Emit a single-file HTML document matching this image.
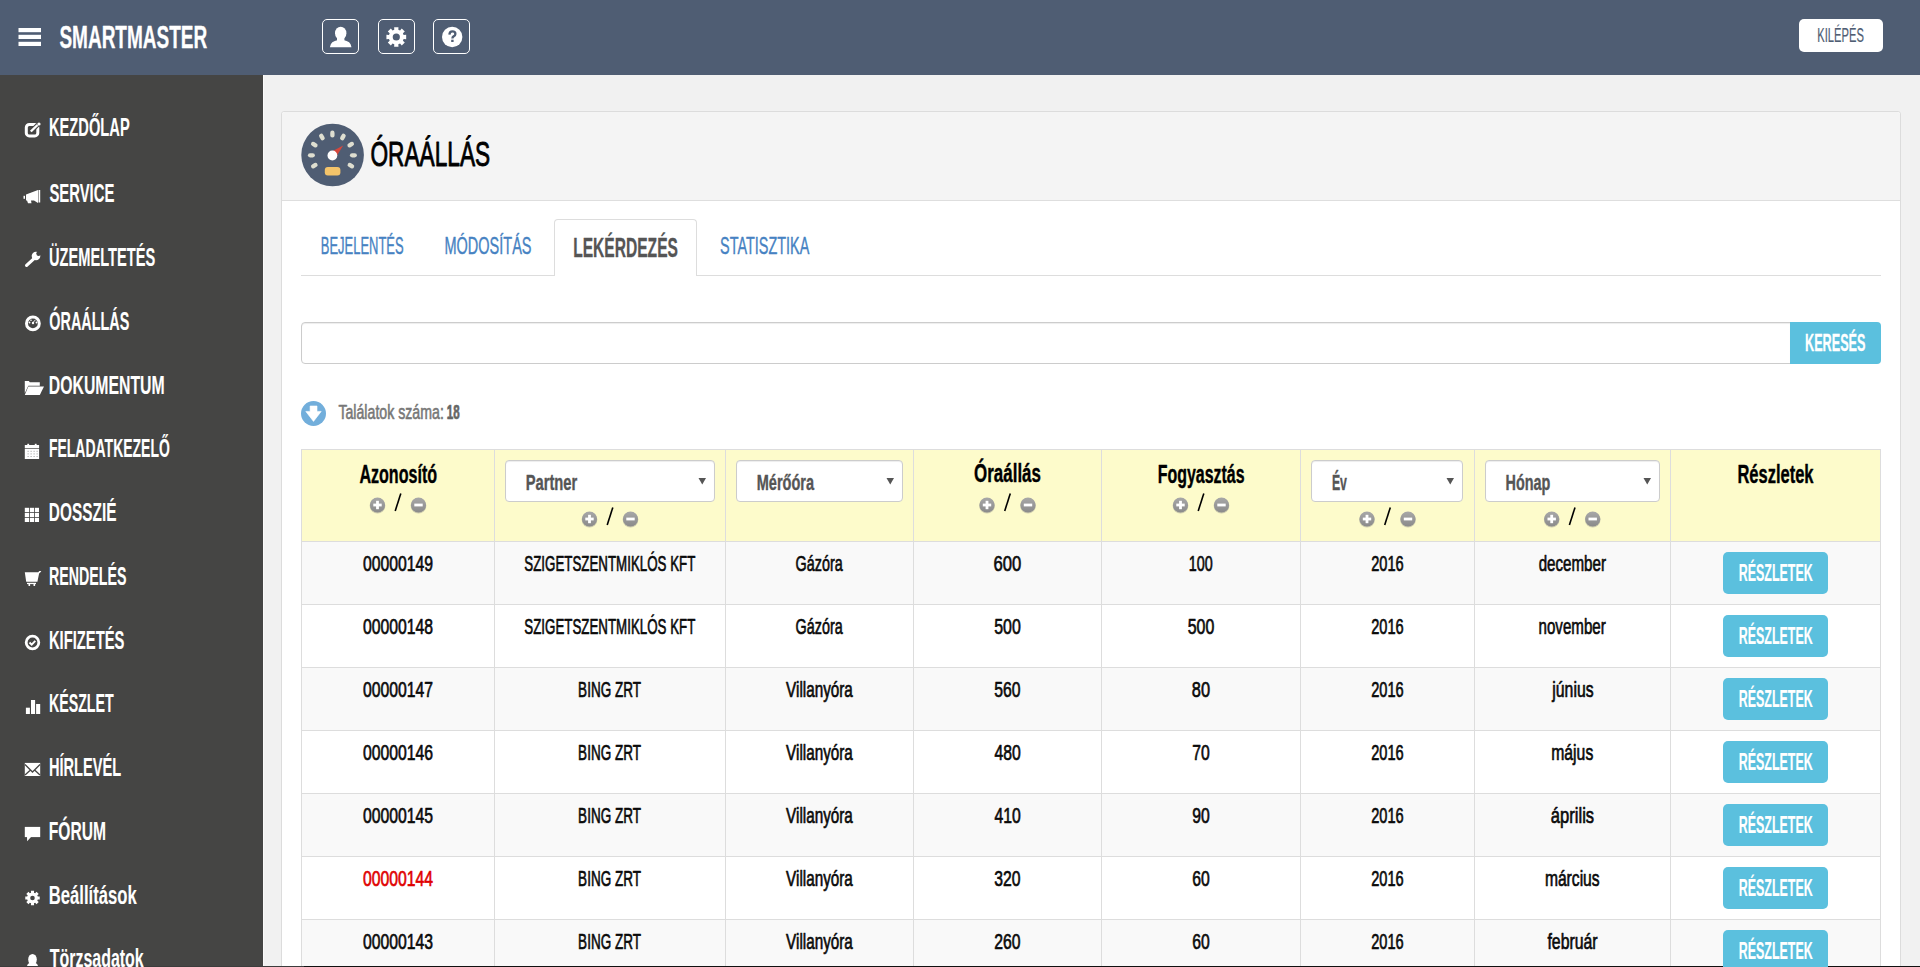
<!DOCTYPE html>
<html><head><meta charset="utf-8"><title>Óraállás - SmartMaster</title>
<style>
html,body{margin:0;padding:0;width:1920px;height:967px;overflow:hidden;background:#f1f1f1;font-family:"Liberation Sans",sans-serif}
#root{position:relative;width:1920px;height:967px;overflow:hidden}
svg{position:absolute;left:0;top:0}
svg text{font-family:"Liberation Sans",sans-serif}
</style></head><body><div id="root">
<div style="position:absolute;left:0px;top:0px;width:1920px;height:75px;background:#4f5d73"></div>
<div style="position:absolute;left:0px;top:75px;width:263px;height:892px;background:#454544"></div>
<div style="position:absolute;left:263px;top:75px;width:1px;height:892px;background:#fafafa"></div>
<div style="position:absolute;left:281px;top:111px;width:1620px;height:900px;background:#fff;border:1px solid #dcdcdc;border-radius:3px;box-sizing:border-box"></div>
<div style="position:absolute;left:282px;top:112px;width:1618px;height:88px;background:#f4f4f4;border-radius:3px 3px 0 0"></div>
<div style="position:absolute;left:282px;top:200px;width:1618px;height:1px;background:#dedede"></div>
<div style="position:absolute;left:301px;top:275px;width:1580px;height:1px;background:#dddddd"></div>
<div style="position:absolute;left:554px;top:219px;width:143px;height:57px;background:#fff;border:1px solid #dddddd;border-bottom:none;border-radius:4px 4px 0 0;box-sizing:border-box"></div>
<div style="position:absolute;left:301px;top:322px;width:1490px;height:42px;background:#fff;border:1px solid #cccccc;border-radius:4px 0 0 4px;box-sizing:border-box;box-shadow:inset 0 1px 1px rgba(0,0,0,.075)"></div>
<div style="position:absolute;left:1790px;top:322px;width:91px;height:42px;background:#5bc0de;border-radius:0 4px 4px 0"></div>
<div style="position:absolute;left:322px;top:19px;width:37px;height:35px;border:1px solid #fff;border-radius:5px;box-sizing:border-box"></div>
<div style="position:absolute;left:378px;top:19px;width:37px;height:35px;border:1px solid #fff;border-radius:5px;box-sizing:border-box"></div>
<div style="position:absolute;left:433px;top:19px;width:37px;height:35px;border:1px solid #fff;border-radius:5px;box-sizing:border-box"></div>
<div style="position:absolute;left:1799px;top:19px;width:84px;height:33px;background:#fff;border-radius:5px"></div>
<div style="position:absolute;left:301px;top:449px;width:1580px;height:92px;background:#fdfbcb"></div>
<div style="position:absolute;left:301px;top:541px;width:1580px;height:63px;background:#f9f9f9"></div>
<div style="position:absolute;left:301px;top:604px;width:1580px;height:63px;background:#ffffff"></div>
<div style="position:absolute;left:301px;top:667px;width:1580px;height:63px;background:#f9f9f9"></div>
<div style="position:absolute;left:301px;top:730px;width:1580px;height:63px;background:#ffffff"></div>
<div style="position:absolute;left:301px;top:793px;width:1580px;height:63px;background:#f9f9f9"></div>
<div style="position:absolute;left:301px;top:856px;width:1580px;height:63px;background:#ffffff"></div>
<div style="position:absolute;left:301px;top:919px;width:1580px;height:63px;background:#f9f9f9"></div>
<div style="position:absolute;left:301px;top:449px;width:1580px;height:1px;background:#dddddd"></div>
<div style="position:absolute;left:301px;top:541px;width:1580px;height:1px;background:#dddddd"></div>
<div style="position:absolute;left:301px;top:604px;width:1580px;height:1px;background:#dddddd"></div>
<div style="position:absolute;left:301px;top:667px;width:1580px;height:1px;background:#dddddd"></div>
<div style="position:absolute;left:301px;top:730px;width:1580px;height:1px;background:#dddddd"></div>
<div style="position:absolute;left:301px;top:793px;width:1580px;height:1px;background:#dddddd"></div>
<div style="position:absolute;left:301px;top:856px;width:1580px;height:1px;background:#dddddd"></div>
<div style="position:absolute;left:301px;top:919px;width:1580px;height:1px;background:#dddddd"></div>
<div style="position:absolute;left:301px;top:982px;width:1580px;height:1px;background:#dddddd"></div>
<div style="position:absolute;left:301px;top:449px;width:1px;height:600px;background:#dddddd"></div>
<div style="position:absolute;left:494px;top:449px;width:1px;height:600px;background:#dddddd"></div>
<div style="position:absolute;left:725px;top:449px;width:1px;height:600px;background:#dddddd"></div>
<div style="position:absolute;left:913px;top:449px;width:1px;height:600px;background:#dddddd"></div>
<div style="position:absolute;left:1101px;top:449px;width:1px;height:600px;background:#dddddd"></div>
<div style="position:absolute;left:1300px;top:449px;width:1px;height:600px;background:#dddddd"></div>
<div style="position:absolute;left:1474px;top:449px;width:1px;height:600px;background:#dddddd"></div>
<div style="position:absolute;left:1670px;top:449px;width:1px;height:600px;background:#dddddd"></div>
<div style="position:absolute;left:1880px;top:449px;width:1px;height:600px;background:#dddddd"></div>
<div style="position:absolute;left:505px;top:460px;width:210px;height:42px;background:#fff;border:1px solid #cccccc;border-radius:4px;box-sizing:border-box;box-shadow:inset 0 1px 1px rgba(0,0,0,.075)"></div>
<div style="position:absolute;left:736px;top:460px;width:167px;height:42px;background:#fff;border:1px solid #cccccc;border-radius:4px;box-sizing:border-box;box-shadow:inset 0 1px 1px rgba(0,0,0,.075)"></div>
<div style="position:absolute;left:1311px;top:460px;width:152px;height:42px;background:#fff;border:1px solid #cccccc;border-radius:4px;box-sizing:border-box;box-shadow:inset 0 1px 1px rgba(0,0,0,.075)"></div>
<div style="position:absolute;left:1485px;top:460px;width:175px;height:42px;background:#fff;border:1px solid #cccccc;border-radius:4px;box-sizing:border-box;box-shadow:inset 0 1px 1px rgba(0,0,0,.075)"></div>
<div style="position:absolute;left:0px;top:966px;width:304px;height:1px;background:#3c3c3c"></div>
<div style="position:absolute;left:304px;top:966px;width:1616px;height:1px;background:#111"></div>
<div style="position:absolute;left:1723px;top:552px;width:105px;height:42px;background:#5bc0de;border-radius:5px"></div>
<div style="position:absolute;left:1723px;top:615px;width:105px;height:42px;background:#5bc0de;border-radius:5px"></div>
<div style="position:absolute;left:1723px;top:678px;width:105px;height:42px;background:#5bc0de;border-radius:5px"></div>
<div style="position:absolute;left:1723px;top:741px;width:105px;height:42px;background:#5bc0de;border-radius:5px"></div>
<div style="position:absolute;left:1723px;top:804px;width:105px;height:42px;background:#5bc0de;border-radius:5px"></div>
<div style="position:absolute;left:1723px;top:867px;width:105px;height:42px;background:#5bc0de;border-radius:5px"></div>
<div style="position:absolute;left:1723px;top:930px;width:105px;height:42px;background:#5bc0de;border-radius:5px"></div>
<svg width="1920" height="967" viewBox="0 0 1920 967">
<defs><linearGradient id="pmg" x1="0" y1="0" x2="0" y2="1"><stop offset="0" stop-color="#a8a8a8"/><stop offset="1" stop-color="#8a8a8a"/></linearGradient></defs>
<rect x="18.5" y="28" width="22.5" height="4.2" fill="#fff"/>
<rect x="18.5" y="34.8" width="22.5" height="4.2" fill="#fff"/>
<rect x="18.5" y="41.8" width="22.5" height="4.2" fill="#fff"/>
<ellipse cx="340.7" cy="33.2" rx="5.7" ry="6.5" fill="#fff"/><rect x="337" y="37" width="7.4" height="4" fill="#fff"/><path d="M329.9,47.2 L330.8,44.2 Q331.8,41.8 334.8,41 L337.3,40.2 L344.1,40.2 L346.6,41 Q349.6,41.8 350.6,44.2 L351.5,47.2 Z" fill="#fff"/>
<polygon points="403.62,34.97 406.17,34.84 406.17,39.16 403.62,39.03 402.91,40.75 404.81,42.45 401.75,45.51 400.05,43.61 398.33,44.32 398.46,46.87 394.14,46.87 394.27,44.32 392.55,43.61 390.85,45.51 387.79,42.45 389.69,40.75 388.98,39.03 386.43,39.16 386.43,34.84 388.98,34.97 389.69,33.25 387.79,31.55 390.85,28.49 392.55,30.39 394.27,29.68 394.14,27.13 398.46,27.13 398.33,29.68 400.05,30.39 401.75,28.49 404.81,31.55 402.91,33.25" fill="#fff"/><circle cx="396.3" cy="37" r="3.6" fill="#4f5d73"/>
<circle cx="452.2" cy="37" r="10.2" fill="#fff"/><path d="M449.4,34.6 Q449.6,31.4 452.4,31.4 Q455.4,31.4 455.4,34 Q455.4,35.6 453.6,36.4 Q452.4,37 452.4,38.4" fill="none" stroke="#4f5d73" stroke-width="2.3"/><rect x="451.2" y="39.7" width="2.4" height="2.3" fill="#4f5d73"/>
<circle cx="332.6" cy="155" r="31.3" fill="#4f5d73"/>
<rect x="328.9" y="131.95" width="7" height="4.3" rx="2.15" fill="#deded0" transform="rotate(-90.3 332.4 134.1)"/>
<rect x="318.4" y="134.85" width="7" height="4.3" rx="2.15" fill="#deded0" transform="rotate(-120.1 321.9 137)"/>
<rect x="339.4" y="134.85" width="7" height="4.3" rx="2.15" fill="#deded0" transform="rotate(-60.4 342.9 137)"/>
<rect x="310.8" y="142.45" width="7" height="4.3" rx="2.15" fill="#deded0" transform="rotate(-149.5 314.3 144.6)"/>
<rect x="347.2" y="142.45" width="7" height="4.3" rx="2.15" fill="#deded0" transform="rotate(-30.5 350.7 144.6)"/>
<rect x="307.9" y="153.15" width="7" height="4.3" rx="2.15" fill="#deded0" transform="rotate(180.0 311.4 155.3)"/>
<rect x="349.9" y="153.15" width="7" height="4.3" rx="2.15" fill="#deded0" transform="rotate(0.0 353.4 155.3)"/>
<rect x="310.8" y="163.45" width="7" height="4.3" rx="2.15" fill="#deded0" transform="rotate(150.5 314.3 165.6)"/>
<rect x="347.4" y="163.45" width="7" height="4.3" rx="2.15" fill="#deded0" transform="rotate(29.2 350.9 165.6)"/>
<polygon points="329.8,152.6 343.2,145.6 335.2,158.2" fill="#d4473d"/>
<circle cx="332.4" cy="155.5" r="4.9" fill="#fff"/>
<rect x="324.8" y="167" width="15.6" height="8.4" rx="3" fill="#f4c46a"/>
<circle cx="313.5" cy="413.5" r="12.5" fill="#72aedb"/><path d="M310.1,406 h6.9 v5.4 h4.2 l-7.7,10 l-7.7,-10 h4.3z" fill="#fff" stroke="#fff" stroke-width=".6" stroke-linejoin="round"/>
<polygon points="698.5,478 706,478 702.25,484.5" fill="#555"/>
<polygon points="886.5,478 894,478 890.25,484.5" fill="#555"/>
<polygon points="1446.5,478 1454,478 1450.25,484.5" fill="#555"/>
<polygon points="1643.5,478 1651,478 1647.25,484.5" fill="#555"/>
<circle cx="377.5" cy="505.8" r="7.8" fill="#7a7a7a" opacity=".35"/><circle cx="377.5" cy="505" r="7.6" fill="url(#pmg)"/><rect x="373.3" y="503.6" width="8.4" height="2.8" fill="#fff"/><rect x="376.1" y="500.8" width="2.8" height="8.4" fill="#fff"/><circle cx="418.5" cy="505.8" r="7.8" fill="#7a7a7a" opacity=".35"/><circle cx="418.5" cy="505" r="7.6" fill="url(#pmg)"/><rect x="414.3" y="503.6" width="8.4" height="2.8" fill="#fff"/><line x1="395.2" y1="511" x2="400.8" y2="493.5" stroke="#000" stroke-width="1.6"/>
<circle cx="987.0" cy="505.8" r="7.8" fill="#7a7a7a" opacity=".35"/><circle cx="987.0" cy="505" r="7.6" fill="url(#pmg)"/><rect x="982.8" y="503.6" width="8.4" height="2.8" fill="#fff"/><rect x="985.6" y="500.8" width="2.8" height="8.4" fill="#fff"/><circle cx="1028.0" cy="505.8" r="7.8" fill="#7a7a7a" opacity=".35"/><circle cx="1028.0" cy="505" r="7.6" fill="url(#pmg)"/><rect x="1023.8" y="503.6" width="8.4" height="2.8" fill="#fff"/><line x1="1004.7" y1="511" x2="1010.3" y2="493.5" stroke="#000" stroke-width="1.6"/>
<circle cx="1180.5" cy="505.8" r="7.8" fill="#7a7a7a" opacity=".35"/><circle cx="1180.5" cy="505" r="7.6" fill="url(#pmg)"/><rect x="1176.3" y="503.6" width="8.4" height="2.8" fill="#fff"/><rect x="1179.1" y="500.8" width="2.8" height="8.4" fill="#fff"/><circle cx="1221.5" cy="505.8" r="7.8" fill="#7a7a7a" opacity=".35"/><circle cx="1221.5" cy="505" r="7.6" fill="url(#pmg)"/><rect x="1217.3" y="503.6" width="8.4" height="2.8" fill="#fff"/><line x1="1198.2" y1="511" x2="1203.8" y2="493.5" stroke="#000" stroke-width="1.6"/>
<circle cx="589.5" cy="519.8" r="7.8" fill="#7a7a7a" opacity=".35"/><circle cx="589.5" cy="519" r="7.6" fill="url(#pmg)"/><rect x="585.3" y="517.6" width="8.4" height="2.8" fill="#fff"/><rect x="588.1" y="514.8" width="2.8" height="8.4" fill="#fff"/><circle cx="630.5" cy="519.8" r="7.8" fill="#7a7a7a" opacity=".35"/><circle cx="630.5" cy="519" r="7.6" fill="url(#pmg)"/><rect x="626.3" y="517.6" width="8.4" height="2.8" fill="#fff"/><line x1="607.2" y1="525" x2="612.8" y2="507.5" stroke="#000" stroke-width="1.6"/>
<circle cx="1367.0" cy="519.8" r="7.8" fill="#7a7a7a" opacity=".35"/><circle cx="1367.0" cy="519" r="7.6" fill="url(#pmg)"/><rect x="1362.8" y="517.6" width="8.4" height="2.8" fill="#fff"/><rect x="1365.6" y="514.8" width="2.8" height="8.4" fill="#fff"/><circle cx="1408.0" cy="519.8" r="7.8" fill="#7a7a7a" opacity=".35"/><circle cx="1408.0" cy="519" r="7.6" fill="url(#pmg)"/><rect x="1403.8" y="517.6" width="8.4" height="2.8" fill="#fff"/><line x1="1384.7" y1="525" x2="1390.3" y2="507.5" stroke="#000" stroke-width="1.6"/>
<circle cx="1551.7" cy="519.8" r="7.8" fill="#7a7a7a" opacity=".35"/><circle cx="1551.7" cy="519" r="7.6" fill="url(#pmg)"/><rect x="1547.5" y="517.6" width="8.4" height="2.8" fill="#fff"/><rect x="1550.3" y="514.8" width="2.8" height="8.4" fill="#fff"/><circle cx="1592.7" cy="519.8" r="7.8" fill="#7a7a7a" opacity=".35"/><circle cx="1592.7" cy="519" r="7.6" fill="url(#pmg)"/><rect x="1588.5" y="517.6" width="8.4" height="2.8" fill="#fff"/><line x1="1569.4" y1="525" x2="1575.0" y2="507.5" stroke="#000" stroke-width="1.6"/>
<rect x="26.3" y="124.4" width="11.5" height="11.5" rx="3" fill="none" stroke="#fff" stroke-width="3"/><line x1="30.5" y1="131.8" x2="38" y2="124.5" stroke="#454544" stroke-width="4.5"/><line x1="30.8" y1="131.5" x2="37.5" y2="125" stroke="#fff" stroke-width="2.4"/><circle cx="39" cy="124" r="1.6" fill="#fff"/>
<path d="M26,194.5 L38,190 L38,203 L34,200.5 L31,200.5 L31.5,203.3 L28,203.3 L27,200.5 L26,200.5 Z" fill="#fff"/><rect x="38.5" y="190" width="1.7" height="12.5" fill="#fff"/><rect x="23.5" y="195.8" width="1.5" height="3" fill="#fff"/>
<line x1="26.6" y1="265.4" x2="34" y2="258.6" stroke="#fff" stroke-width="3.2" stroke-linecap="round"/><circle cx="36" cy="256" r="4.3" fill="#fff"/><circle cx="38.6" cy="253.6" r="2.3" fill="#454544"/>
<circle cx="32.9" cy="323.4" r="6.4" fill="none" stroke="#fff" stroke-width="3"/><circle cx="33" cy="323" r="1.2" fill="#fff"/><circle cx="29.5" cy="322.5" r=".9" fill="#fff"/><circle cx="36.5" cy="322.5" r=".9" fill="#fff"/><circle cx="31" cy="320.3" r=".8" fill="#fff"/><line x1="33" y1="322.5" x2="35.5" y2="319.8" stroke="#fff" stroke-width=".9"/>
<path d="M24.8,381 h4 l1,1.2 h10 v3.5 h-11.5 l-3.5,7.5 z" fill="#fff"/><path d="M28.3,386.5 h15.7 l-4.2,8.5 h-15 z" fill="#fff"/>
<rect x="24.8" y="445" width="14.3" height="3.3" fill="#fff"/><rect x="27.3" y="443.8" width="1.8" height="2" fill="#fff"/><rect x="34.8" y="443.8" width="1.8" height="2" fill="#fff"/><rect x="24.8" y="449" width="14.3" height="10" fill="#fff"/>
<rect x="24.8" y="507.8" width="4.2" height="4.2" fill="#fff"/>
<rect x="29.8" y="507.8" width="4.2" height="4.2" fill="#fff"/>
<rect x="34.8" y="507.8" width="4.2" height="4.2" fill="#fff"/>
<rect x="24.8" y="512.8" width="4.2" height="4.2" fill="#fff"/>
<rect x="29.8" y="512.8" width="4.2" height="4.2" fill="#fff"/>
<rect x="34.8" y="512.8" width="4.2" height="4.2" fill="#fff"/>
<rect x="24.8" y="517.8" width="4.2" height="4.2" fill="#fff"/>
<rect x="29.8" y="517.8" width="4.2" height="4.2" fill="#fff"/>
<rect x="34.8" y="517.8" width="4.2" height="4.2" fill="#fff"/>
<rect x="27.6" y="450.8" width="1" height="1" fill="#999"/>
<rect x="30.6" y="450.8" width="1" height="1" fill="#999"/>
<rect x="33.6" y="450.8" width="1" height="1" fill="#999"/>
<rect x="36.6" y="450.8" width="1" height="1" fill="#999"/>
<rect x="27.6" y="453.40000000000003" width="1" height="1" fill="#999"/>
<rect x="30.6" y="453.40000000000003" width="1" height="1" fill="#999"/>
<rect x="33.6" y="453.40000000000003" width="1" height="1" fill="#999"/>
<rect x="36.6" y="453.40000000000003" width="1" height="1" fill="#999"/>
<rect x="27.6" y="456.0" width="1" height="1" fill="#999"/>
<rect x="30.6" y="456.0" width="1" height="1" fill="#999"/>
<rect x="33.6" y="456.0" width="1" height="1" fill="#999"/>
<rect x="36.6" y="456.0" width="1" height="1" fill="#999"/>
<path d="M24.8,572.2 h13.5 l1,-1.2 h2 l-0.6,1 l-1.6,1.5 l-1.7,8.3 h-11.2 z" fill="#fff"/><rect x="27" y="582.8" width="9" height="1.3" fill="#fff"/><rect x="28.5" y="583" width="1.6" height="3" fill="#fff"/><rect x="33.5" y="583" width="1.6" height="3" fill="#fff"/>
<circle cx="32.5" cy="642.5" r="6.3" fill="none" stroke="#fff" stroke-width="2.8"/><path d="M29.5,642.5 l2.2,2.2 l3.6,-3.8" fill="none" stroke="#fff" stroke-width="1.9"/>
<rect x="25.9" y="707.7" width="4" height="6.3" fill="#fff"/><rect x="31" y="700" width="4.1" height="14" fill="#fff"/><rect x="36.1" y="704" width="4.1" height="10" fill="#fff"/>
<rect x="24.8" y="762.9" width="15.4" height="13.1" fill="#fff"/><path d="M25,764.5 L32.5,772 L40,764.5 M25,775 L30.8,769.7 M40,775 L34.3,769.7" fill="none" stroke="#454544" stroke-width="1.3"/>
<rect x="24.8" y="826.9" width="15.4" height="10.2" fill="#fff"/><path d="M27,837 L27.2,841.2 L31,837 z" fill="#fff"/>
<polygon points="37.80,896.53 39.73,896.41 39.73,899.59 37.80,899.47 37.29,900.71 38.73,901.99 36.49,904.23 35.21,902.79 33.97,903.30 34.09,905.23 30.91,905.23 31.03,903.30 29.79,902.79 28.51,904.23 26.27,901.99 27.71,900.71 27.20,899.47 25.27,899.59 25.27,896.41 27.20,896.53 27.71,895.29 26.27,894.01 28.51,891.77 29.79,893.21 31.03,892.70 30.91,890.77 34.09,890.77 33.97,892.70 35.21,893.21 36.49,891.77 38.73,894.01 37.29,895.29" fill="#fff"/><circle cx="32.5" cy="898" r="2.3" fill="#454544"/>
<ellipse cx="32.5" cy="959.5" rx="4.3" ry="5.5" fill="#fff"/><path d="M27,966 Q27.5,963 31,962.5 h3 Q37.5,963 38,966 z" fill="#fff"/>
<text x="59.38" y="47.65" font-size="31.25" font-weight="bold" fill="#fff" textLength="147.90" lengthAdjust="spacingAndGlyphs" stroke="#fff" stroke-width="0.3" stroke-linejoin="round">SMARTMASTER</text>
<text x="1817.31" y="41.70" font-size="19.77" font-weight="normal" fill="#4f5d73" textLength="46.54" lengthAdjust="spacingAndGlyphs" stroke="#4f5d73" stroke-width="0.2" stroke-linejoin="round">KILÉPÉS</text>
<text x="48.90" y="135.95" font-size="26.02" font-weight="bold" fill="#fff" textLength="80.80" lengthAdjust="spacingAndGlyphs" stroke="#fff" stroke-width="0.1" stroke-linejoin="round">KEZDŐLAP</text>
<text x="49.40" y="201.95" font-size="26.02" font-weight="bold" fill="#fff" textLength="65.00" lengthAdjust="spacingAndGlyphs" stroke="#fff" stroke-width="0.1" stroke-linejoin="round">SERVICE</text>
<text x="48.97" y="265.85" font-size="26.02" font-weight="bold" fill="#fff" textLength="106.29" lengthAdjust="spacingAndGlyphs" stroke="#fff" stroke-width="0.1" stroke-linejoin="round">ÜZEMELTETÉS</text>
<text x="49.27" y="329.95" font-size="26.02" font-weight="bold" fill="#fff" textLength="80.09" lengthAdjust="spacingAndGlyphs" stroke="#fff" stroke-width="0.1" stroke-linejoin="round">ÓRAÁLLÁS</text>
<text x="48.82" y="393.75" font-size="26.02" font-weight="bold" fill="#fff" textLength="115.80" lengthAdjust="spacingAndGlyphs" stroke="#fff" stroke-width="0.1" stroke-linejoin="round">DOKUMENTUM</text>
<text x="48.94" y="456.85" font-size="26.02" font-weight="bold" fill="#fff" textLength="120.91" lengthAdjust="spacingAndGlyphs" stroke="#fff" stroke-width="0.1" stroke-linejoin="round">FELADATKEZELŐ</text>
<text x="48.85" y="520.85" font-size="26.02" font-weight="bold" fill="#fff" textLength="67.64" lengthAdjust="spacingAndGlyphs" stroke="#fff" stroke-width="0.1" stroke-linejoin="round">DOSSZIÉ</text>
<text x="48.92" y="584.75" font-size="26.02" font-weight="bold" fill="#fff" textLength="77.53" lengthAdjust="spacingAndGlyphs" stroke="#fff" stroke-width="0.1" stroke-linejoin="round">RENDELÉS</text>
<text x="48.89" y="648.75" font-size="26.02" font-weight="bold" fill="#fff" textLength="75.60" lengthAdjust="spacingAndGlyphs" stroke="#fff" stroke-width="0.1" stroke-linejoin="round">KIFIZETÉS</text>
<text x="48.93" y="711.95" font-size="26.02" font-weight="bold" fill="#fff" textLength="64.78" lengthAdjust="spacingAndGlyphs" stroke="#fff" stroke-width="0.1" stroke-linejoin="round">KÉSZLET</text>
<text x="48.90" y="775.85" font-size="26.02" font-weight="bold" fill="#fff" textLength="72.19" lengthAdjust="spacingAndGlyphs" stroke="#fff" stroke-width="0.1" stroke-linejoin="round">HÍRLEVÉL</text>
<text x="48.84" y="839.95" font-size="26.02" font-weight="bold" fill="#fff" textLength="57.25" lengthAdjust="spacingAndGlyphs" stroke="#fff" stroke-width="0.1" stroke-linejoin="round">FÓRUM</text>
<text x="48.77" y="903.65" font-size="26.02" font-weight="bold" fill="#fff" textLength="87.89" lengthAdjust="spacingAndGlyphs" stroke="#fff" stroke-width="0.1" stroke-linejoin="round">Beállítások</text>
<text x="49.69" y="967.45" font-size="26.02" font-weight="bold" fill="#fff" textLength="94.06" lengthAdjust="spacingAndGlyphs" stroke="#fff" stroke-width="0.1" stroke-linejoin="round">Törzsadatok</text>
<text x="370.43" y="165.55" font-size="35.61" font-weight="normal" fill="#000" textLength="119.75" lengthAdjust="spacingAndGlyphs" stroke="#000" stroke-width="0.9" stroke-linejoin="round">ÓRAÁLLÁS</text>
<text x="320.76" y="253.80" font-size="24.13" font-weight="normal" fill="#4682c2" textLength="82.84" lengthAdjust="spacingAndGlyphs" stroke="#4682c2" stroke-width="0.4" stroke-linejoin="round">BEJELENTÉS</text>
<text x="444.54" y="253.80" font-size="24.13" font-weight="normal" fill="#4682c2" textLength="86.92" lengthAdjust="spacingAndGlyphs" stroke="#4682c2" stroke-width="0.4" stroke-linejoin="round">MÓDOSÍTÁS</text>
<text x="573.14" y="257.15" font-size="26.74" font-weight="bold" fill="#555" textLength="104.81" lengthAdjust="spacingAndGlyphs" stroke="#555" stroke-width="0.3" stroke-linejoin="round">LEKÉRDEZÉS</text>
<text x="720.05" y="254.00" font-size="24.13" font-weight="normal" fill="#4682c2" textLength="89.26" lengthAdjust="spacingAndGlyphs" stroke="#4682c2" stroke-width="0.4" stroke-linejoin="round">STATISZTIKA</text>
<text x="1805.03" y="351.05" font-size="24.56" font-weight="bold" fill="#fff" textLength="60.46" lengthAdjust="spacingAndGlyphs" stroke="#fff" stroke-width="0.3" stroke-linejoin="round">KERESÉS</text>
<text x="338.42" y="419.20" font-size="19.48" font-weight="normal" fill="#777" textLength="105.40" lengthAdjust="spacingAndGlyphs" stroke="#777" stroke-width="0.6" stroke-linejoin="round">Találatok száma:</text>
<text x="446.86" y="419.15" font-size="19.33" font-weight="bold" fill="#666" textLength="12.87" lengthAdjust="spacingAndGlyphs" stroke="#666" stroke-width="0.7" stroke-linejoin="round">18</text>
<text x="359.40" y="482.80" font-size="25.58" font-weight="bold" fill="#000" textLength="77.69" lengthAdjust="spacingAndGlyphs" stroke="#000" stroke-width="0.4" stroke-linejoin="round">Azonosító</text>
<text x="974.12" y="482.30" font-size="25.58" font-weight="bold" fill="#000" textLength="66.79" lengthAdjust="spacingAndGlyphs" stroke="#000" stroke-width="0.4" stroke-linejoin="round">Óraállás</text>
<text x="1157.71" y="482.50" font-size="25.58" font-weight="bold" fill="#000" textLength="86.80" lengthAdjust="spacingAndGlyphs" stroke="#000" stroke-width="0.4" stroke-linejoin="round">Fogyasztás</text>
<text x="1737.38" y="482.50" font-size="25.58" font-weight="bold" fill="#000" textLength="76.15" lengthAdjust="spacingAndGlyphs" stroke="#000" stroke-width="0.4" stroke-linejoin="round">Részletek</text>
<text x="525.74" y="489.55" font-size="22.67" font-weight="bold" fill="#555" textLength="51.55" lengthAdjust="spacingAndGlyphs" stroke="#555" stroke-width="0.4" stroke-linejoin="round">Partner</text>
<text x="756.76" y="489.55" font-size="22.67" font-weight="bold" fill="#555" textLength="57.30" lengthAdjust="spacingAndGlyphs" stroke="#555" stroke-width="0.4" stroke-linejoin="round">Mérőóra</text>
<text x="1331.90" y="489.55" font-size="22.67" font-weight="bold" fill="#555" textLength="15.00" lengthAdjust="spacingAndGlyphs" stroke="#555" stroke-width="0.4" stroke-linejoin="round">Év</text>
<text x="1505.56" y="489.55" font-size="22.67" font-weight="bold" fill="#555" textLength="44.83" lengthAdjust="spacingAndGlyphs" stroke="#555" stroke-width="0.4" stroke-linejoin="round">Hónap</text>
<text x="363.02" y="571.25" font-size="22.97" font-weight="normal" fill="#0a0a0a" textLength="70.03" lengthAdjust="spacingAndGlyphs" stroke="#0a0a0a" stroke-width="0.7" stroke-linejoin="round">00000149</text>
<text x="524.35" y="571.25" font-size="22.97" font-weight="normal" fill="#0a0a0a" textLength="170.96" lengthAdjust="spacingAndGlyphs" stroke="#0a0a0a" stroke-width="0.7" stroke-linejoin="round">SZIGETSZENTMIKLÓS KFT</text>
<text x="795.58" y="571.25" font-size="22.97" font-weight="normal" fill="#0a0a0a" textLength="47.11" lengthAdjust="spacingAndGlyphs" stroke="#0a0a0a" stroke-width="0.7" stroke-linejoin="round">Gázóra</text>
<text x="993.52" y="571.25" font-size="22.97" font-weight="normal" fill="#0a0a0a" textLength="27.77" lengthAdjust="spacingAndGlyphs" stroke="#0a0a0a" stroke-width="0.7" stroke-linejoin="round">600</text>
<text x="1188.77" y="571.25" font-size="22.97" font-weight="normal" fill="#0a0a0a" textLength="23.93" lengthAdjust="spacingAndGlyphs" stroke="#0a0a0a" stroke-width="0.7" stroke-linejoin="round">100</text>
<text x="1371.17" y="571.25" font-size="22.97" font-weight="normal" fill="#0a0a0a" textLength="32.51" lengthAdjust="spacingAndGlyphs" stroke="#0a0a0a" stroke-width="0.7" stroke-linejoin="round">2016</text>
<text x="1538.64" y="571.25" font-size="22.97" font-weight="normal" fill="#0a0a0a" textLength="67.36" lengthAdjust="spacingAndGlyphs" stroke="#0a0a0a" stroke-width="0.7" stroke-linejoin="round">december</text>
<text x="1738.69" y="580.90" font-size="24.42" font-weight="bold" fill="#fff" textLength="74.03" lengthAdjust="spacingAndGlyphs" stroke="#fff" stroke-width="0.2" stroke-linejoin="round">RÉSZLETEK</text>
<text x="362.98" y="634.25" font-size="22.97" font-weight="normal" fill="#0a0a0a" textLength="70.03" lengthAdjust="spacingAndGlyphs" stroke="#0a0a0a" stroke-width="0.7" stroke-linejoin="round">00000148</text>
<text x="524.35" y="634.25" font-size="22.97" font-weight="normal" fill="#0a0a0a" textLength="170.96" lengthAdjust="spacingAndGlyphs" stroke="#0a0a0a" stroke-width="0.7" stroke-linejoin="round">SZIGETSZENTMIKLÓS KFT</text>
<text x="795.58" y="634.25" font-size="22.97" font-weight="normal" fill="#0a0a0a" textLength="47.11" lengthAdjust="spacingAndGlyphs" stroke="#0a0a0a" stroke-width="0.7" stroke-linejoin="round">Gázóra</text>
<text x="994.21" y="634.25" font-size="22.97" font-weight="normal" fill="#0a0a0a" textLength="26.55" lengthAdjust="spacingAndGlyphs" stroke="#0a0a0a" stroke-width="0.7" stroke-linejoin="round">500</text>
<text x="1187.71" y="634.25" font-size="22.97" font-weight="normal" fill="#0a0a0a" textLength="26.55" lengthAdjust="spacingAndGlyphs" stroke="#0a0a0a" stroke-width="0.7" stroke-linejoin="round">500</text>
<text x="1371.17" y="634.25" font-size="22.97" font-weight="normal" fill="#0a0a0a" textLength="32.51" lengthAdjust="spacingAndGlyphs" stroke="#0a0a0a" stroke-width="0.7" stroke-linejoin="round">2016</text>
<text x="1538.57" y="634.25" font-size="22.97" font-weight="normal" fill="#0a0a0a" textLength="67.14" lengthAdjust="spacingAndGlyphs" stroke="#0a0a0a" stroke-width="0.7" stroke-linejoin="round">november</text>
<text x="1738.69" y="643.90" font-size="24.42" font-weight="bold" fill="#fff" textLength="74.03" lengthAdjust="spacingAndGlyphs" stroke="#fff" stroke-width="0.2" stroke-linejoin="round">RÉSZLETEK</text>
<text x="363.06" y="697.25" font-size="22.97" font-weight="normal" fill="#0a0a0a" textLength="70.03" lengthAdjust="spacingAndGlyphs" stroke="#0a0a0a" stroke-width="0.7" stroke-linejoin="round">00000147</text>
<text x="578.12" y="697.25" font-size="22.97" font-weight="normal" fill="#0a0a0a" textLength="62.93" lengthAdjust="spacingAndGlyphs" stroke="#0a0a0a" stroke-width="0.7" stroke-linejoin="round">BING ZRT</text>
<text x="786.12" y="697.25" font-size="22.97" font-weight="normal" fill="#0a0a0a" textLength="66.73" lengthAdjust="spacingAndGlyphs" stroke="#0a0a0a" stroke-width="0.7" stroke-linejoin="round">Villanyóra</text>
<text x="994.36" y="697.25" font-size="22.97" font-weight="normal" fill="#0a0a0a" textLength="26.26" lengthAdjust="spacingAndGlyphs" stroke="#0a0a0a" stroke-width="0.7" stroke-linejoin="round">560</text>
<text x="1191.81" y="697.25" font-size="22.97" font-weight="normal" fill="#0a0a0a" textLength="18.25" lengthAdjust="spacingAndGlyphs" stroke="#0a0a0a" stroke-width="0.7" stroke-linejoin="round">80</text>
<text x="1371.17" y="697.25" font-size="22.97" font-weight="normal" fill="#0a0a0a" textLength="32.51" lengthAdjust="spacingAndGlyphs" stroke="#0a0a0a" stroke-width="0.7" stroke-linejoin="round">2016</text>
<text x="1552.34" y="697.25" font-size="22.97" font-weight="normal" fill="#0a0a0a" textLength="41.22" lengthAdjust="spacingAndGlyphs" stroke="#0a0a0a" stroke-width="0.7" stroke-linejoin="round">június</text>
<text x="1738.69" y="706.90" font-size="24.42" font-weight="bold" fill="#fff" textLength="74.03" lengthAdjust="spacingAndGlyphs" stroke="#fff" stroke-width="0.2" stroke-linejoin="round">RÉSZLETEK</text>
<text x="362.98" y="760.25" font-size="22.97" font-weight="normal" fill="#0a0a0a" textLength="70.03" lengthAdjust="spacingAndGlyphs" stroke="#0a0a0a" stroke-width="0.7" stroke-linejoin="round">00000146</text>
<text x="578.12" y="760.25" font-size="22.97" font-weight="normal" fill="#0a0a0a" textLength="62.93" lengthAdjust="spacingAndGlyphs" stroke="#0a0a0a" stroke-width="0.7" stroke-linejoin="round">BING ZRT</text>
<text x="786.12" y="760.25" font-size="22.97" font-weight="normal" fill="#0a0a0a" textLength="66.73" lengthAdjust="spacingAndGlyphs" stroke="#0a0a0a" stroke-width="0.7" stroke-linejoin="round">Villanyóra</text>
<text x="994.52" y="760.25" font-size="22.97" font-weight="normal" fill="#0a0a0a" textLength="26.26" lengthAdjust="spacingAndGlyphs" stroke="#0a0a0a" stroke-width="0.7" stroke-linejoin="round">480</text>
<text x="1192.15" y="760.25" font-size="22.97" font-weight="normal" fill="#0a0a0a" textLength="17.51" lengthAdjust="spacingAndGlyphs" stroke="#0a0a0a" stroke-width="0.7" stroke-linejoin="round">70</text>
<text x="1371.17" y="760.25" font-size="22.97" font-weight="normal" fill="#0a0a0a" textLength="32.51" lengthAdjust="spacingAndGlyphs" stroke="#0a0a0a" stroke-width="0.7" stroke-linejoin="round">2016</text>
<text x="1551.23" y="760.25" font-size="22.97" font-weight="normal" fill="#0a0a0a" textLength="42.04" lengthAdjust="spacingAndGlyphs" stroke="#0a0a0a" stroke-width="0.7" stroke-linejoin="round">május</text>
<text x="1738.69" y="769.90" font-size="24.42" font-weight="bold" fill="#fff" textLength="74.03" lengthAdjust="spacingAndGlyphs" stroke="#fff" stroke-width="0.2" stroke-linejoin="round">RÉSZLETEK</text>
<text x="362.98" y="823.25" font-size="22.97" font-weight="normal" fill="#0a0a0a" textLength="70.03" lengthAdjust="spacingAndGlyphs" stroke="#0a0a0a" stroke-width="0.7" stroke-linejoin="round">00000145</text>
<text x="578.12" y="823.25" font-size="22.97" font-weight="normal" fill="#0a0a0a" textLength="62.93" lengthAdjust="spacingAndGlyphs" stroke="#0a0a0a" stroke-width="0.7" stroke-linejoin="round">BING ZRT</text>
<text x="786.12" y="823.25" font-size="22.97" font-weight="normal" fill="#0a0a0a" textLength="66.73" lengthAdjust="spacingAndGlyphs" stroke="#0a0a0a" stroke-width="0.7" stroke-linejoin="round">Villanyóra</text>
<text x="994.52" y="823.25" font-size="22.97" font-weight="normal" fill="#0a0a0a" textLength="26.26" lengthAdjust="spacingAndGlyphs" stroke="#0a0a0a" stroke-width="0.7" stroke-linejoin="round">410</text>
<text x="1192.19" y="823.25" font-size="22.97" font-weight="normal" fill="#0a0a0a" textLength="17.51" lengthAdjust="spacingAndGlyphs" stroke="#0a0a0a" stroke-width="0.7" stroke-linejoin="round">90</text>
<text x="1371.17" y="823.25" font-size="22.97" font-weight="normal" fill="#0a0a0a" textLength="32.51" lengthAdjust="spacingAndGlyphs" stroke="#0a0a0a" stroke-width="0.7" stroke-linejoin="round">2016</text>
<text x="1550.84" y="823.25" font-size="22.97" font-weight="normal" fill="#0a0a0a" textLength="43.27" lengthAdjust="spacingAndGlyphs" stroke="#0a0a0a" stroke-width="0.7" stroke-linejoin="round">április</text>
<text x="1738.69" y="832.90" font-size="24.42" font-weight="bold" fill="#fff" textLength="74.03" lengthAdjust="spacingAndGlyphs" stroke="#fff" stroke-width="0.2" stroke-linejoin="round">RÉSZLETEK</text>
<text x="362.90" y="886.25" font-size="22.97" font-weight="normal" fill="#e00000" textLength="70.03" lengthAdjust="spacingAndGlyphs" stroke="#e00000" stroke-width="0.7" stroke-linejoin="round">00000144</text>
<text x="578.12" y="886.25" font-size="22.97" font-weight="normal" fill="#0a0a0a" textLength="62.93" lengthAdjust="spacingAndGlyphs" stroke="#0a0a0a" stroke-width="0.7" stroke-linejoin="round">BING ZRT</text>
<text x="786.12" y="886.25" font-size="22.97" font-weight="normal" fill="#0a0a0a" textLength="66.73" lengthAdjust="spacingAndGlyphs" stroke="#0a0a0a" stroke-width="0.7" stroke-linejoin="round">Villanyóra</text>
<text x="994.36" y="886.25" font-size="22.97" font-weight="normal" fill="#0a0a0a" textLength="26.26" lengthAdjust="spacingAndGlyphs" stroke="#0a0a0a" stroke-width="0.7" stroke-linejoin="round">320</text>
<text x="1192.15" y="886.25" font-size="22.97" font-weight="normal" fill="#0a0a0a" textLength="17.51" lengthAdjust="spacingAndGlyphs" stroke="#0a0a0a" stroke-width="0.7" stroke-linejoin="round">60</text>
<text x="1371.17" y="886.25" font-size="22.97" font-weight="normal" fill="#0a0a0a" textLength="32.51" lengthAdjust="spacingAndGlyphs" stroke="#0a0a0a" stroke-width="0.7" stroke-linejoin="round">2016</text>
<text x="1544.88" y="886.25" font-size="22.97" font-weight="normal" fill="#0a0a0a" textLength="54.77" lengthAdjust="spacingAndGlyphs" stroke="#0a0a0a" stroke-width="0.7" stroke-linejoin="round">március</text>
<text x="1738.69" y="895.90" font-size="24.42" font-weight="bold" fill="#fff" textLength="74.03" lengthAdjust="spacingAndGlyphs" stroke="#fff" stroke-width="0.2" stroke-linejoin="round">RÉSZLETEK</text>
<text x="362.98" y="949.25" font-size="22.97" font-weight="normal" fill="#0a0a0a" textLength="70.03" lengthAdjust="spacingAndGlyphs" stroke="#0a0a0a" stroke-width="0.7" stroke-linejoin="round">00000143</text>
<text x="578.12" y="949.25" font-size="22.97" font-weight="normal" fill="#0a0a0a" textLength="62.93" lengthAdjust="spacingAndGlyphs" stroke="#0a0a0a" stroke-width="0.7" stroke-linejoin="round">BING ZRT</text>
<text x="786.12" y="949.25" font-size="22.97" font-weight="normal" fill="#0a0a0a" textLength="66.73" lengthAdjust="spacingAndGlyphs" stroke="#0a0a0a" stroke-width="0.7" stroke-linejoin="round">Villanyóra</text>
<text x="994.28" y="949.25" font-size="22.97" font-weight="normal" fill="#0a0a0a" textLength="26.26" lengthAdjust="spacingAndGlyphs" stroke="#0a0a0a" stroke-width="0.7" stroke-linejoin="round">260</text>
<text x="1192.15" y="949.25" font-size="22.97" font-weight="normal" fill="#0a0a0a" textLength="17.51" lengthAdjust="spacingAndGlyphs" stroke="#0a0a0a" stroke-width="0.7" stroke-linejoin="round">60</text>
<text x="1371.17" y="949.25" font-size="22.97" font-weight="normal" fill="#0a0a0a" textLength="32.51" lengthAdjust="spacingAndGlyphs" stroke="#0a0a0a" stroke-width="0.7" stroke-linejoin="round">2016</text>
<text x="1547.46" y="949.25" font-size="22.97" font-weight="normal" fill="#0a0a0a" textLength="50.13" lengthAdjust="spacingAndGlyphs" stroke="#0a0a0a" stroke-width="0.7" stroke-linejoin="round">február</text>
<text x="1738.69" y="958.90" font-size="24.42" font-weight="bold" fill="#fff" textLength="74.03" lengthAdjust="spacingAndGlyphs" stroke="#fff" stroke-width="0.2" stroke-linejoin="round">RÉSZLETEK</text>
</svg>
</div></body></html>
